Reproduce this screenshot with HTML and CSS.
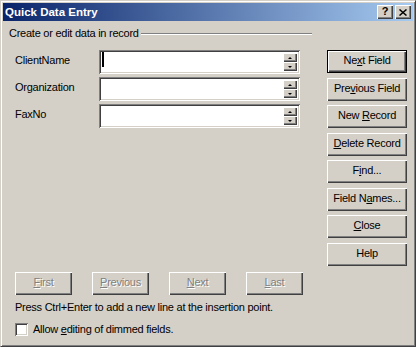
FILE: index.html
```html
<!DOCTYPE html>
<html>
<head>
  <meta charset="UTF-8">
  <title>Quick Data Entry</title>
  <link rel="stylesheet" href="styles.css">
</head>
<body>
  <div class="window">
    <div class="titlebar">
      <span class="title">Quick Data Entry</span>
      <div class="caption-buttons">
        <span class="cap-btn help-btn">?</span>
        <span class="cap-btn close-btn">
          <svg width="8" height="7" viewBox="0 0 8 7"><path d="M0.5 0.5 L7.5 6.5 M7.5 0.5 L0.5 6.5" stroke="#000" stroke-width="1.5" fill="none"/></svg>
        </span>
      </div>
    </div>

    <div class="body">
      <div class="top">
        <div class="record">
          <div class="group-label"><span>Create or edit data in record</span><span class="rule"></span></div>

          <div class="fields">
            <div class="row">
              <span class="label">ClientName</span>
              <div class="field">
                <span class="caret"></span>
                <span class="spin"><span class="spin-up"><i class="arrow-up"></i></span><span class="spin-down"><i class="arrow-down"></i></span></span>
              </div>
            </div>
            <div class="row">
              <span class="label">Organization</span>
              <div class="field">
                <span class="spin"><span class="spin-up"><i class="arrow-up"></i></span><span class="spin-down"><i class="arrow-down"></i></span></span>
              </div>
            </div>
            <div class="row">
              <span class="label">FaxNo</span>
              <div class="field">
                <span class="spin"><span class="spin-up"><i class="arrow-up"></i></span><span class="spin-down"><i class="arrow-down"></i></span></span>
              </div>
            </div>
          </div>
        </div>

        <div class="actions">
          <span class="btn default"><span>Ne<u>x</u>t Field</span></span>
          <span class="btn"><span>Pre<u>v</u>ious Field</span></span>
          <span class="btn"><span>New <u>R</u>ecord</span></span>
          <span class="btn"><span><u>D</u>elete Record</span></span>
          <span class="btn"><span>F<u>i</u>nd...</span></span>
          <span class="btn"><span>Field N<u>a</u>mes...</span></span>
          <span class="btn"><span><u>C</u>lose</span></span>
          <span class="btn"><span>Help</span></span>
        </div>
      </div>

      <div class="nav">
        <span class="btn disabled"><span><u>F</u>irst</span></span>
        <span class="btn disabled"><span><u>P</u>revious</span></span>
        <span class="btn disabled"><span><u>N</u>ext</span></span>
        <span class="btn disabled"><span><u>L</u>ast</span></span>
      </div>

      <p class="hint">Press Ctrl+Enter to add a new line at the insertion point.</p>

      <div class="check">
        <span class="box"></span>
        <span>Allow <u>e</u>diting of dimmed fields.</span>
      </div>
    </div>
  </div>
</body>
</html>
```

FILE: styles.css
```css
body {
  margin: 0;
  background-color: #d4d0c8;
  font-family: 'Liberation Sans', Arial, sans-serif;
  font-size: 11px;
  line-height: 13px;
  letter-spacing: -0.25px;
  color: #000000;
}

.window {
  box-sizing: border-box;
  width: 416px;
  height: 347px;
  padding: 2px;
  background-color: #d4d0c8;
  border: 1px solid;
  border-color: #d4d0c8 #404040 #404040 #d4d0c8;
  box-shadow: inset 1px 1px #ffffff, inset -1px -1px #808080;
}

/* Title bar */
.titlebar {
  height: 18px;
  display: flex;
  align-items: center;
  padding: 0 2px;
  background: linear-gradient(90deg, #0a246a, #a6caf0);
}

.title {
  color: #ffffff;
  font-weight: bold;
  font-size: 11.5px;
  letter-spacing: 0;
  padding-top: 1px;
}

.caption-buttons {
  margin-left: auto;
  display: flex;
  gap: 2px;
}

.cap-btn {
  box-sizing: border-box;
  width: 16px;
  height: 14px;
  display: flex;
  align-items: center;
  justify-content: center;
  background-color: #d4d0c8;
  box-shadow: inset 1px 1px #ffffff, inset -1px -1px #404040, inset -2px -2px #808080;
}

.help-btn {
  font-weight: bold;
  font-size: 11px;
  letter-spacing: 0;
  padding-bottom: 1px;
}

/* Body */
.body {
  padding: 6px 0 0 6px;
}

.top {
  display: flex;
}

.record {
  width: 303px;
}

.group-label {
  display: flex;
  align-items: center;
}

.rule {
  flex: 1;
  height: 0;
  margin-left: 2px;
  border-top: 1px solid #808080;
  border-bottom: 1px solid #ffffff;
}

.fields {
  margin-top: 10px;
  padding-left: 6px;
  display: flex;
  flex-direction: column;
  gap: 3px;
}

.row {
  display: flex;
}

.label {
  width: 84px;
  padding-top: 4px;
}

.field {
  box-sizing: border-box;
  width: 201px;
  height: 24px;
  padding: 2px 3px 3px 3px;
  display: flex;
  background-color: #ffffff;
  box-shadow: inset 1px 1px #808080, inset -1px -1px #ffffff, inset 2px 2px #404040, inset -2px -2px #d4d0c8;
}

.caret {
  width: 2px;
  height: 15px;
  background-color: #000000;
}

.spin {
  margin-left: auto;
  margin-top: 1px;
  width: 14px;
  display: flex;
  flex-direction: column;
}

.spin-up,
.spin-down {
  height: 9px;
  display: flex;
  align-items: center;
  justify-content: center;
  background-color: #d4d0c8;
  box-shadow: inset 1px 1px #ffffff, inset -1px -1px #404040, inset -2px -2px #808080;
}

.arrow-up,
.arrow-down {
  width: 0;
  height: 0;
  border-left: 2px solid transparent;
  border-right: 2px solid transparent;
}

.arrow-up {
  border-bottom: 2px solid #000000;
}

.arrow-down {
  border-top: 2px solid #000000;
}

/* Buttons */
.btn {
  box-sizing: border-box;
  height: 23px;
  display: flex;
  align-items: center;
  justify-content: center;
  padding-bottom: 2px;
  background-color: #d4d0c8;
  box-shadow: inset 1px 1px #ffffff, inset -1px -1px #404040, inset -2px -2px #808080;
}

.btn.default {
  box-shadow: inset 0 0 0 1px #000000, inset 2px 2px #ffffff, inset -2px -2px #404040, inset -3px -3px #808080;
}

.btn.disabled {
  color: #808080;
  text-shadow: 1px 1px #ffffff;
}

.actions {
  width: 80px;
  margin: 23px 0 0 15px;
  display: flex;
  flex-direction: column;
  gap: 4.57px;
}

.nav {
  margin-top: 6px;
  padding-left: 6px;
  display: flex;
  gap: 20px;
}

.nav .btn {
  width: 57px;
}

.hint {
  margin: 6px 0 0 6px;
}

.check {
  margin: 9px 0 0 6px;
  display: flex;
  align-items: center;
  gap: 5px;
}

.box {
  width: 13px;
  height: 13px;
  background-color: #ffffff;
  box-shadow: inset 1px 1px #808080, inset -1px -1px #ffffff, inset 2px 2px #404040, inset -2px -2px #d4d0c8;
}
```
